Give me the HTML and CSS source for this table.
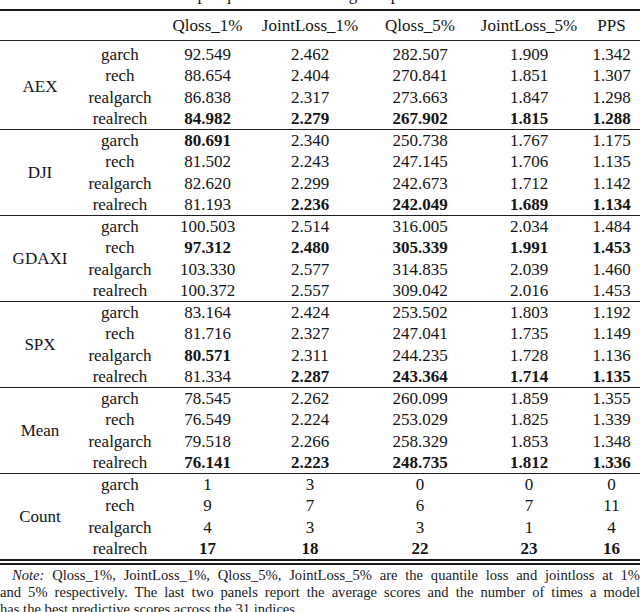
FILE: index.html
```html
<!DOCTYPE html>
<html>
<head>
<meta charset="utf-8">
<link rel="stylesheet" href="styles.css">
</head>
<body>
<div class="cap"><span class="cap-text">Table 3: Out-of-sample quantile forecasting comparison</span></div>
<table class="results">
  <colgroup>
    <col class="c-idx"><col class="c-mod"><col class="c-q1"><col class="c-j1"><col class="c-q5"><col class="c-j5"><col class="c-pps">
  </colgroup>
  <thead>
    <tr><th></th><th></th><th>Qloss_1%</th><th>JointLoss_1%</th><th>Qloss_5%</th><th>JointLoss_5%</th><th>PPS</th></tr>
  </thead>
  <tbody class="first">
    <tr><td class="idx" rowspan="4">AEX</td><td>garch</td><td>92.549</td><td>2.462</td><td>282.507</td><td>1.909</td><td>1.342</td></tr>
    <tr><td>rech</td><td>88.654</td><td>2.404</td><td>270.841</td><td>1.851</td><td>1.307</td></tr>
    <tr><td>realgarch</td><td>86.838</td><td>2.317</td><td>273.663</td><td>1.847</td><td>1.298</td></tr>
    <tr><td>realrech</td><td class="b">84.982</td><td class="b">2.279</td><td class="b">267.902</td><td class="b">1.815</td><td class="b">1.288</td></tr>
  </tbody>
  <tbody>
    <tr><td class="idx" rowspan="4">DJI</td><td>garch</td><td class="b">80.691</td><td>2.340</td><td>250.738</td><td>1.767</td><td>1.175</td></tr>
    <tr><td>rech</td><td>81.502</td><td>2.243</td><td>247.145</td><td>1.706</td><td>1.135</td></tr>
    <tr><td>realgarch</td><td>82.620</td><td>2.299</td><td>242.673</td><td>1.712</td><td>1.142</td></tr>
    <tr><td>realrech</td><td>81.193</td><td class="b">2.236</td><td class="b">242.049</td><td class="b">1.689</td><td class="b">1.134</td></tr>
  </tbody>
  <tbody>
    <tr><td class="idx" rowspan="4">GDAXI</td><td>garch</td><td>100.503</td><td>2.514</td><td>316.005</td><td>2.034</td><td>1.484</td></tr>
    <tr><td>rech</td><td class="b">97.312</td><td class="b">2.480</td><td class="b">305.339</td><td class="b">1.991</td><td class="b">1.453</td></tr>
    <tr><td>realgarch</td><td>103.330</td><td>2.577</td><td>314.835</td><td>2.039</td><td>1.460</td></tr>
    <tr><td>realrech</td><td>100.372</td><td>2.557</td><td>309.042</td><td>2.016</td><td>1.453</td></tr>
  </tbody>
  <tbody>
    <tr><td class="idx" rowspan="4">SPX</td><td>garch</td><td>83.164</td><td>2.424</td><td>253.502</td><td>1.803</td><td>1.192</td></tr>
    <tr><td>rech</td><td>81.716</td><td>2.327</td><td>247.041</td><td>1.735</td><td>1.149</td></tr>
    <tr><td>realgarch</td><td class="b">80.571</td><td>2.311</td><td>244.235</td><td>1.728</td><td>1.136</td></tr>
    <tr><td>realrech</td><td>81.334</td><td class="b">2.287</td><td class="b">243.364</td><td class="b">1.714</td><td class="b">1.135</td></tr>
  </tbody>
  <tbody>
    <tr><td class="idx" rowspan="4">Mean</td><td>garch</td><td>78.545</td><td>2.262</td><td>260.099</td><td>1.859</td><td>1.355</td></tr>
    <tr><td>rech</td><td>76.549</td><td>2.224</td><td>253.029</td><td>1.825</td><td>1.339</td></tr>
    <tr><td>realgarch</td><td>79.518</td><td>2.266</td><td>258.329</td><td>1.853</td><td>1.348</td></tr>
    <tr><td>realrech</td><td class="b">76.141</td><td class="b">2.223</td><td class="b">248.735</td><td class="b">1.812</td><td class="b">1.336</td></tr>
  </tbody>
  <tbody class="last">
    <tr><td class="idx" rowspan="4">Count</td><td>garch</td><td>1</td><td>3</td><td>0</td><td>0</td><td>0</td></tr>
    <tr><td>rech</td><td>9</td><td>7</td><td>6</td><td>7</td><td>11</td></tr>
    <tr><td>realgarch</td><td>4</td><td>3</td><td>3</td><td>1</td><td>4</td></tr>
    <tr><td>realrech</td><td class="b">17</td><td class="b">18</td><td class="b">22</td><td class="b">23</td><td class="b">16</td></tr>
  </tbody>
</table>
<div class="note">
  <div class="note-line first-line"><em>Note:</em> Qloss_1%, JointLoss_1%, Qloss_5%, JointLoss_5% are the quantile loss and jointloss at 1%</div>
  <div class="note-line">and 5% respectively. The last two panels report the average scores and the number of times a model</div>
  <div class="note-line last-line">has the best predictive scores across the 31 indices.</div>
</div>
</body>
</html>
```

FILE: styles.css
```css
html, body {
  margin: 0;
  padding: 0;
  background: #ffffff;
}

body {
  width: 640px;
  height: 612px;
  overflow: hidden;
  font-family: "Liberation Serif", "DejaVu Serif", serif;
  color: #141414;
}

.cap {
  height: 9px;
  overflow: hidden;
  font-size: 17px;
  line-height: 20px;
}

.cap-text {
  display: block;
  margin-top: -15px;
  padding-left: 60px;
}

.results {
  width: 640px;
  border-collapse: collapse;
  table-layout: fixed;
  font-size: 17px;
  border-top: 2px solid #1a1a1a;
}

.c-idx { width: 80px; }
.c-mod { width: 80px; }
.c-q1 { width: 95px; }
.c-j1 { width: 110px; }
.c-q5 { width: 110px; }
.c-j5 { width: 108px; }
.c-pps { width: 57px; }

.results th {
  font-weight: normal;
  height: 29px;
  padding: 0;
  line-height: 29px;
  text-align: center;
  border-bottom: 1px solid #2a2a2a;
}

.results td {
  padding: 0;
  height: 21.25px;
  line-height: 21.25px;
  text-align: center;
  white-space: nowrap;
}

.results tbody {
  border-top: 1px solid #1e1e1e;
}

.results tbody.first {
  border-top: none;
}

.results tbody.first tr:first-child td {
  padding-top: 3px;
}

.results tbody.last {
  border-bottom: 6px double #1a1a1a;
}

.results td.idx {
  vertical-align: middle;
}

.results td.b {
  font-weight: bold;
}

.note {
  margin-top: 2px;
  font-size: 14.6px;
  line-height: 17px;
  color: #1a1a1a;
}

.note-line {
  text-align: justify;
  text-align-last: justify;
}

.note-line.first-line {
  padding-left: 12px;
}

.note-line.last-line {
  text-align: left;
  text-align-last: left;
}
```
